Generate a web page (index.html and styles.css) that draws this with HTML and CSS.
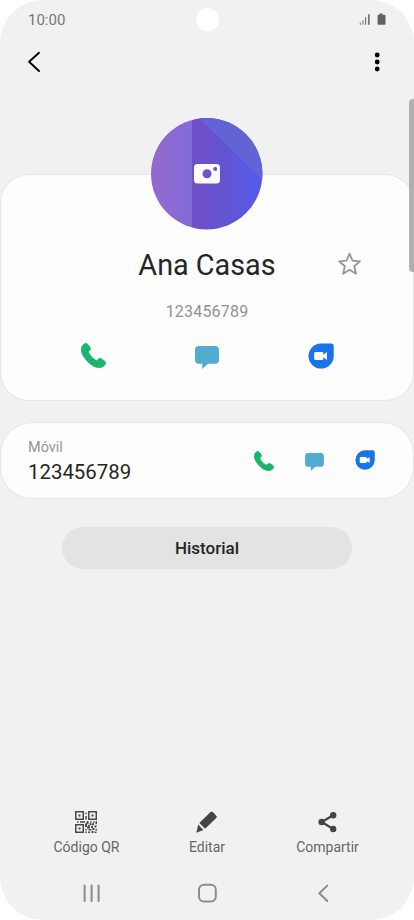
FILE: index.html
```html
<!DOCTYPE html>
<html lang="es">
<head>
<meta charset="utf-8">
<title>Ana Casas</title>
<link rel="stylesheet" href="styles.css">
</head>
<body>
<svg class="defs" width="0" height="0">
  <symbol id="phone" viewBox="0 0 25 25"><path d="M1.200 3.200C2.200 1.800 3.500.6 4.600.3C5.400.1 6 .5 6.600 1.300L8.900 4.300C9.700 5.400 9.500 6.200 8.800 7.100C7.800 8.200 7.200 8.700 7.700 9.900C9 12.700 11.700 15.600 14.500 17.100C15.600 17.600 16.200 17.500 17.200 16.400C18 15.500 19 15 20.100 15.700L23.600 18.200C24.500 18.900 24.900 19.700 24.500 20.600C24 22.100 22.300 23.700 20.500 24.200C17.800 25 14.300 24.200 11.400 22.400C7.200 19.700 3.200 15.300 1.200 10.700C.1 8 .1 5.200 1.200 3.200Z" stroke-width=".9"/></symbol>
  <symbol id="message" viewBox="0 0 24 23"><path d="M4 0H20Q24 0 24 4V13.700Q24 17.700 20 17.700H13L7.300 23V17.700H4Q0 17.700 0 13.700V4Q0 0 4 0Z"/></symbol>
  <symbol id="video" viewBox="0 0 26 26"><path fill="#1a73e8" d="M13 .4H23.200Q25.700.4 25.700 2.900V13A12.600 12.600 0 1 1 13 .4Z"/><path fill="#fff" d="M7.200 9H14.200Q15.300 9 15.300 10V11.800L19 9V17L15.300 14.200V16Q15.300 17 14.200 17H7.200Q6.200 17 6.200 16V10Q6.200 9 7.200 9Z"/></symbol>
</svg>
<div class="screen">
  <header class="status">
    <span class="clock">10:00</span>
    <svg class="status-icons" viewBox="0 0 28 13" width="28" height="13">
      <g fill="#767676"><path d="M.8 9.500h1v2.300h-1zM3.400 7.300h1.100v4.500H3.400zM6 4.300h1.200v7.500H6zM9 1.300h1.700v10.500H9z"/></g>
      <path fill="#616161" d="M20.500.4h3.200v1.300h2q.8 0 .8.800v8.500q0 .8-.8.800h-6.300q-.8 0-.8-.8V2.500q0-.8.8-.8h1.100z"/>
    </svg>
  </header>
  <div class="camera-hole"></div>
  <nav class="toolbar">
    <svg viewBox="0 0 14 22" width="14" height="22"><path d="M12 1.800L2.100 10.800L12 20" fill="none" stroke="#000" stroke-width="1.900" stroke-linecap="round" stroke-linejoin="round"/></svg>
    <svg viewBox="0 0 6 22" width="6" height="22"><circle cx="3.200" cy="4" r="2.400"/><circle cx="3.200" cy="11" r="2.400"/><circle cx="3.200" cy="18" r="2.400"/></svg>
  </nav>
  <section class="card profile">
    <svg class="avatar" viewBox="0 0 112 112" width="112" height="112">
      <defs>
        <linearGradient id="left" x1="0" y1="0" x2="1" y2="0"><stop offset="0" stop-color="#9569ce"/><stop offset="1" stop-color="#826bd7"/></linearGradient>
        <linearGradient id="right" x1="0" y1="0" x2="1" y2="0"><stop offset="0" stop-color="#7150c6"/><stop offset=".5" stop-color="#6254d3"/><stop offset="1" stop-color="#525ced"/></linearGradient>
        <clipPath id="round"><circle cx="55.700" cy="55.700" r="55.700"/></clipPath>
      </defs>
      <g clip-path="url(#round)">
        <path fill="url(#left)" d="M0 0h41v112H0z"/>
        <path fill="url(#right)" d="M41 0H112v112H41z"/>
        <path fill="#6263d4" d="M48 0L112 63V0z"/>
      </g>
      <path fill="#fbfaff" d="M46.500 46h19q3.500 0 3.500 3.500V62q0 3.500-3.500 3.500h-19Q43 65.500 43 62V49.500q0-3.500 3.500-3.500z"/>
      <circle cx="56" cy="55.700" r="4.500" fill="#6c54c9"/><circle cx="64.200" cy="50.900" r="2" fill="#5e55d2"/>
    </svg>
    <div class="name-row">
      <h1>Ana Casas</h1>
      <svg class="star" viewBox="0 0 24 24" width="24" height="24"><path d="M11.500 1.700L14.500 8.600L21.900 9.300L16.300 14.200L18 21.700L11.500 17.800L5.100 21.700L6.800 14.200L1.200 9.300L8.600 8.600Z" fill="none" stroke="#969696" stroke-width="1.800" stroke-linejoin="round"/></svg>
    </div>
    <p class="subtitle">123456789</p>
    <div class="actions">
      <svg class="green" width="25" height="25"><use href="#phone"/></svg>
      <svg class="cyan" width="24" height="23"><use href="#message"/></svg>
      <svg width="26" height="26"><use href="#video"/></svg>
    </div>
  </section>
  <section class="card number">
    <div class="number-text">
      <span class="label">Móvil</span>
      <span class="value">123456789</span>
    </div>
    <div class="number-actions">
      <svg class="green" width="20" height="20"><use href="#phone"/></svg>
      <svg class="cyan" width="19" height="18"><use href="#message"/></svg>
      <svg width="20" height="20"><use href="#video"/></svg>
    </div>
  </section>
  <button class="history">Historial</button>
  <footer class="bottom">
    <div class="tab">
      <svg class="qr" viewBox="0 0 22 22" width="22" height="22" fill="#484848">
        <path fill-rule="evenodd" d="M0 0h9v9H0zM1.500 1.500v6h6v-6zM13 0h9v9h-9zM14.500 1.500v6h6v-6zM0 13h9v9H0zM1.500 14.500v6h6v-6z"/>
        <path d="M3.500 3.500h2v2h-2zM16.500 3.500h2v2h-2zM3.500 16.500h2v2h-2zM10.300 1.500h1.500V3h-1.500zM10.300 5h1.500v3.500h-1.500zM2 10.300h1.500v1.500H2zM5 10.300h5v1.500H5zM11.500 10.300h2v3h-2zM15 10.300h1.500v1.500H15zM18 10.300h1.500v1.500H18zM20.500 10.300H22v3h-1.500zM10 12.500h2V16h-2zM13 14h1.500v1.500H13zM14.500 12.300h2v2h-2zM17 12.300h2v2h-2zM12 15.500h3v2h-3zM16 15h2v2h-2zM19.500 14.500h2v2h-2zM10.300 18h1.500v1.500h-1.500zM13.500 18h3v1.500h-3zM17.500 17h2v2h-2zM20.500 18H22v1.500h-1.500zM10.300 20.500h1.500V22h-1.500zM13 20.500h2V22h-2zM16.500 20h2v2h-2zM19.500 20.500h2V22h-2z"/>
      </svg>
      <span>Código QR</span>
    </div>
    <div class="tab">
      <svg viewBox="0 0 22 22" width="22" height="22" fill="#454545"><path d="M3.300 12L14.600 1.100Q15.700.1 16.800 1.100L20.300 4.700Q21.400 5.800 20.300 6.900L9.100 17.700Z"/><path d="M2.200 13.600L7.400 18.900L.3 21.700Z"/></svg>
      <span>Editar</span>
    </div>
    <div class="tab">
      <svg viewBox="0 0 22 22" width="22" height="22" fill="#454545"><path d="M16.200 4.200L4.700 11L16.200 18" fill="none" stroke="#454545" stroke-width="2.200"/><circle cx="4.700" cy="11" r="3.300"/><circle cx="16.200" cy="4.200" r="3.200"/><circle cx="16.200" cy="18" r="3.200"/></svg>
      <span>Compartir</span>
    </div>
  </footer>
  <nav class="system">
    <svg viewBox="0 0 20 20" width="20" height="20"><path d="M3.600 2.500v15.400M10.600 2.500v15.400M17.600 2.500v15.400"/></svg>
    <svg viewBox="0 0 20 20" width="20" height="20"><rect x="2" y="1.800" width="16.800" height="16.600" rx="5"/></svg>
    <svg viewBox="0 0 20 20" width="20" height="20"><path d="M14.300 2.600L6.300 10.300L14.300 18"/></svg>
  </nav>
  <div class="scrollbar"></div>
</div>
</body>
</html>
```
FILE: styles.css
```css
* { box-sizing: border-box; }

body {
  margin: 0;
  background: #fff;
  font-family: Roboto, "Liberation Sans", sans-serif;
}

svg { display: block; flex: none; }
.defs { position: absolute; }

.screen {
  position: relative;
  display: flex;
  flex-direction: column;
  width: 414px;
  height: 920px;
  overflow: hidden;
  border-radius: 43px;
  background: #f1f1f1;
}

.status {
  display: flex;
  justify-content: space-between;
  align-items: center;
  height: 40px;
  padding: 0 27px 0 28px;
}

.status-icons { margin-top: -1px; }
.clock { font-size: 15px; line-height: 18px; color: #767676; }

.camera-hole {
  position: absolute;
  top: 7.500px;
  left: 195.500px;
  width: 23px;
  height: 23px;
  border-radius: 50%;
  background: #fff;
}

.toolbar {
  display: flex;
  justify-content: space-between;
  align-items: center;
  height: 44px;
  padding: 0 34px 0 27px;
}

.card {
  flex: none;
  border: 1px solid #e6e6e6;
  background: #fdfdfd;
}

.profile {
  display: flex;
  flex-direction: column;
  align-items: center;
  height: 227px;
  margin-top: 90px;
  border-radius: 29px;
}

.avatar { margin-top: -57px; }

.name-row {
  display: grid;
  grid-template-columns: 1fr auto 1fr;
  align-items: center;
  width: 100%;
  margin-top: 17px;
}

h1 {
  grid-column: 2;
  margin: 0;
  font-size: 28.800px;
  font-weight: 400;
  line-height: 36px;
  color: #252525;
}

.star { margin: -2px 0 0 62px; }

.subtitle {
  margin: 19px 0 0;
  font-size: 16px;
  line-height: 20px;
  letter-spacing: .2px;
  color: #929292;
}

.actions {
  display: flex;
  justify-content: space-between;
  align-items: center;
  width: 254px;
  height: 28px;
  margin-top: 20px;
}

.green { fill: #1ab56c; stroke: #1ab56c; overflow: visible; }
.cyan { fill: #52acd0; }
.actions .green { margin: -1px 0 0 1px; }
.actions .cyan { margin-top: 3px; }
.actions svg:last-child { margin-top: -1px; }

.number {
  display: flex;
  justify-content: space-between;
  align-items: center;
  height: 77px;
  margin-top: 21px;
  padding: 0 38px 0 27px;
  border-radius: 32px;
}

.number-text { display: flex; flex-direction: column; }
.label { margin-top: 1px; font-size: 14.500px; line-height: 20px; color: #949494; }
.value { margin-top: 1px; font-size: 20.400px; line-height: 26px; color: #252525; }

.number-actions {
  display: flex;
  justify-content: space-between;
  align-items: center;
  width: 121px;
}

.number-actions .cyan { margin-top: 3px; }
.number-actions svg:last-child { margin-top: -1px; }

.history {
  flex: none;
  align-self: center;
  width: 290px;
  height: 42px;
  margin-top: 28px;
  padding: 0;
  border: 0;
  border-radius: 21px;
  background: #e3e3e3;
  font: 500 17px/20px Roboto, sans-serif;
  color: #252525;
}

.bottom {
  display: flex;
  justify-content: center;
  margin-top: auto;
}

.tab {
  display: flex;
  flex-direction: column;
  align-items: center;
  width: 120.500px;
  gap: 6px;
  font-size: 14px;
  line-height: 17px;
  color: #666;
}

.qr { margin-left: -2px; }

.system {
  display: flex;
  justify-content: space-between;
  width: 252px;
  margin: 27px auto 17px;
  fill: none;
  stroke: #8b8b8b;
  stroke-width: 2;
  stroke-linecap: round;
  stroke-linejoin: round;
}

.scrollbar {
  position: absolute;
  top: 99px;
  right: 0;
  width: 5px;
  height: 173px;
  border-radius: 4px 0 0 4px;
  background: #b0b0b0;
}
```
